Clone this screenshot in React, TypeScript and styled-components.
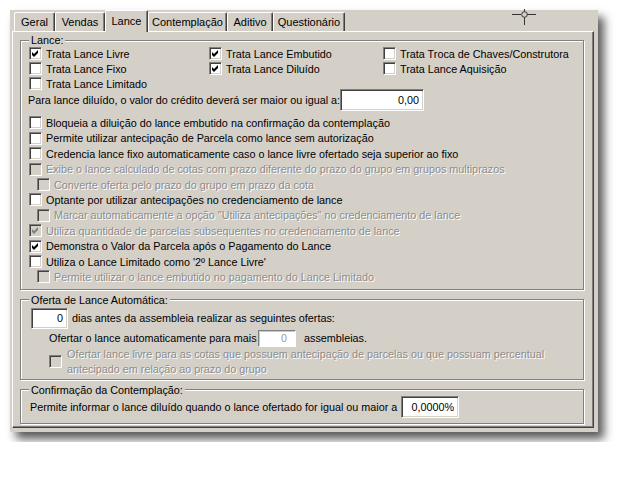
import React from 'react'
import styled, { createGlobalStyle } from 'styled-components'

const GlobalStyle = createGlobalStyle`
  html, body {
    margin: 0;
    padding: 0;
    background: #fff;
  }
  body {
    font-family: 'Liberation Sans', Arial, sans-serif;
    font-size: 10.8px;
    color: #000;
  }
`

interface TabDef {
  title: string
  width: number
}

const tabs: TabDef[] = [
  { title: 'Geral', width: 41 },
  { title: 'Vendas', width: 50 },
  { title: 'Lance', width: 43 },
  { title: 'Contemplação', width: 79 },
  { title: 'Aditivo', width: 46 },
  { title: 'Questionário', width: 72 },
]

interface OptionDef {
  label: string
  checked?: boolean
  disabled?: boolean
  indent?: boolean
}

const lanceGrid: OptionDef[] = [
  { label: 'Trata Lance Livre', checked: true },
  { label: 'Trata Lance Embutido', checked: true },
  { label: 'Trata Troca de Chaves/Construtora' },
  { label: 'Trata Lance Fixo' },
  { label: 'Trata Lance Diluído', checked: true },
  { label: 'Trata Lance Aquisição' },
  { label: 'Trata Lance Limitado' },
]

const lanceList: OptionDef[] = [
  { label: 'Bloqueia a diluição do lance embutido na confirmação da contemplação' },
  { label: 'Permite utilizar antecipação de Parcela como lance sem autorização' },
  { label: 'Credencia lance fixo automaticamente caso o lance livre ofertado seja superior ao fixo' },
  { label: 'Exibe o lance calculado de cotas com prazo diferente do prazo do grupo em grupos multiprazos', disabled: true },
  { label: 'Converte oferta pelo prazo do grupo em prazo da cota', disabled: true, indent: true },
  { label: 'Optante por utilizar antecipações no credenciamento de lance' },
  { label: 'Marcar automaticamente a opção "Utiliza antecipações" no credenciamento de lance', disabled: true, indent: true },
  { label: 'Utiliza quantidade de parcelas subsequentes no credenciamento de lance', disabled: true, checked: true },
  { label: 'Demonstra o Valor da Parcela após o Pagamento do Lance', checked: true },
  { label: "Utiliza o Lance Limitado como '2º Lance Livre'" },
  { label: 'Permite utilizar o lance embutido no pagamento do Lance Limitado', disabled: true, indent: true },
]

function CheckBox(props: { checked?: boolean; disabled?: boolean }) {
  return (
    <Box $disabled={props.disabled}>
      {props.checked && (
        <svg width="11" height="11" viewBox="0 0 11 11">
          <path
            d="M2 4 L4 6 L8 2 L8 5 L4 9 L2 7 Z"
            fill={props.disabled ? '#808080' : '#000'}
          />
        </svg>
      )}
    </Box>
  )
}

function Option(props: OptionDef) {
  return (
    <OptionRow $indent={props.indent} $disabled={props.disabled}>
      <CheckBox checked={props.checked} disabled={props.disabled} />
      <span>{props.label}</span>
    </OptionRow>
  )
}

function Crosshair() {
  return (
    <CursorMark width="24" height="16" viewBox="0 0 24 16">
      <g stroke="#333" strokeWidth="1" fill="none">
        <line x1="0" y1="5.5" x2="9" y2="5.5" />
        <line x1="15" y1="5.5" x2="24" y2="5.5" />
        <line x1="12.5" y1="0" x2="12.5" y2="2.5" />
        <line x1="12.5" y1="8.5" x2="12.5" y2="16" />
        <circle cx="12.5" cy="5.5" r="2.8" />
      </g>
    </CursorMark>
  )
}

export default function App() {
  return (
    <Page>
      <GlobalStyle />
      <Window>
        <Crosshair />
        <TabStrip>
          {tabs.map((tab) => (
            <Tab key={tab.title} $width={tab.width} $active={tab.title === 'Lance'}>
              {tab.title}
            </Tab>
          ))}
        </TabStrip>
        <TabPage>
          <Group>
            <Legend>Lance:</Legend>
            <OptionGrid>
              {lanceGrid.map((opt) => (
                <Option key={opt.label} {...opt} />
              ))}
            </OptionGrid>
            <ValueRow>
              <FieldLabel $width={312}>
                Para lance diluído, o valor do crédito deverá ser maior ou igual a:
              </FieldLabel>
              <NumberField $width={84} $height={22}>0,00</NumberField>
            </ValueRow>
            <OptionList>
              {lanceList.map((opt) => (
                <Option key={opt.label} {...opt} />
              ))}
            </OptionList>
          </Group>

          <Group $gap={4}>
            <Legend>Oferta de Lance Automática:</Legend>
            <AutoRow>
              <NumberField $width={37} $height={21}>0</NumberField>
              <span>dias antes da assembleia realizar as seguintes ofertas:</span>
            </AutoRow>
            <SubRow>
              <FieldLabel $width={209}>Ofertar o lance automaticamente para mais</FieldLabel>
              <NumberField $width={38} $height={17} $disabled>0</NumberField>
              <Trailing>assembleias.</Trailing>
            </SubRow>
            <WrapOption $disabled>
              <CheckBox disabled />
              <span>
                Ofertar lance livre para as cotas que possuem antecipação de parcelas ou que possuam percentual
                <br />
                antecipado em relação ao prazo do grupo
              </span>
            </WrapOption>
          </Group>

          <Group $gap={4} $bottom={5}>
            <Legend>Confirmação da Contemplação:</Legend>
            <ConfirmRow>
              <FieldLabel $width={371}>
                Permite informar o lance diluído quando o lance ofertado for igual ou maior a
              </FieldLabel>
              <NumberField $width={58} $height={22}>0,0000%</NumberField>
            </ConfirmRow>
          </Group>
        </TabPage>
      </Window>
    </Page>
  )
}

const Page = styled.div`
  padding: 10px;
`

const Window = styled.div`
  position: relative;
  width: 588px;
  height: 422px;
  box-sizing: border-box;
  padding: 0 4px 4px 2px;
  background: #d4d0c8;
  box-shadow: 6px 7px 9px rgba(0, 0, 0, 0.65);
  display: flex;
  flex-direction: column;
`

const CursorMark = styled.svg`
  position: absolute;
  left: 502px;
  top: -1px;
`

const TabStrip = styled.div`
  display: flex;
  align-items: flex-end;
  height: 21px;
  padding-left: 2px;
`

const Tab = styled.div<{ $width: number; $active?: boolean }>`
  position: relative;
  z-index: ${(p) => (p.$active ? 1 : 0)};
  width: ${(p) => p.$width}px;
  height: ${(p) => (p.$active ? 22 : 19)}px;
  margin-bottom: ${(p) => (p.$active ? -1 : 0)}px;
  box-sizing: border-box;
  padding-bottom: ${(p) => (p.$active ? 2 : 0)}px;
  display: flex;
  align-items: center;
  justify-content: center;
  background: #d4d0c8;
  border-top: 1px solid #fff;
  border-left: 1px solid #fff;
  border-right: 1px solid #404040;
  border-radius: 2px 2px 0 0;
  box-shadow: inset -1px 0 0 #808080;
  white-space: nowrap;
  font-size: 11px;
`

const TabPage = styled.div`
  flex: 1;
  display: flex;
  flex-direction: column;
  box-sizing: border-box;
  padding: 2px 9px 3px 7px;
  border-top: 1px solid #fff;
  border-left: 1px solid #fff;
  border-right: 1px solid #404040;
  border-bottom: 1px solid #404040;
  box-shadow: inset -1px -1px 0 #808080;
`

const Group = styled.fieldset<{ $gap?: number; $bottom?: number }>`
  margin: ${(p) => p.$gap ?? 0}px 0 0 0;
  padding: 0 8px ${(p) => p.$bottom ?? 2}px 8px;
  min-width: 0;
  border: 1px solid #808080;
  box-shadow: inset 1px 1px 0 #fff, 1px 1px 0 #fff;
`

const Legend = styled.legend`
  padding: 0 2px 0 2px;
  margin-left: 0;
  line-height: 12px;
  background: #d4d0c8;
`

const OptionGrid = styled.div`
  display: grid;
  grid-template-columns: 180px 174px 1fr;
  grid-auto-rows: 15px;
`

const OptionList = styled.div`
  display: grid;
  grid-auto-rows: 15.4px;
  margin-top: 4.3px;
  padding-bottom: 2px;
`

const OptionRow = styled.label<{ $indent?: boolean; $disabled?: boolean }>`
  display: flex;
  align-items: center;
  gap: 4px;
  padding-left: ${(p) => (p.$indent ? 8 : 0)}px;
  white-space: nowrap;
  color: ${(p) => (p.$disabled ? '#8c8c8c' : '#000')};
  text-shadow: ${(p) => (p.$disabled ? '1px 1px 0 #fff' : 'none')};
`

const WrapOption = styled(OptionRow)`
  padding-left: 20px;
  gap: 5px;
  line-height: 15px;
`

const Box = styled.span<{ $disabled?: boolean }>`
  flex: none;
  width: 13px;
  height: 13px;
  box-sizing: border-box;
  display: flex;
  border-top: 1px solid #808080;
  border-left: 1px solid #808080;
  border-right: 1px solid #fff;
  border-bottom: 1px solid #fff;
  box-shadow: inset 1px 1px 0 #404040, inset -1px -1px 0 #d4d0c8;
  background: ${(p) => (p.$disabled ? '#d4d0c8' : '#fff')};
`

const ValueRow = styled.div`
  display: flex;
  align-items: center;
  height: 22px;
  margin: -2px 0 0 -1px;
`

const FieldLabel = styled.span<{ $width: number }>`
  flex: none;
  width: ${(p) => p.$width}px;
  white-space: nowrap;
`

const NumberField = styled.div<{ $width: number; $height: number; $disabled?: boolean }>`
  flex: none;
  width: ${(p) => p.$width}px;
  height: ${(p) => p.$height}px;
  box-sizing: border-box;
  display: flex;
  align-items: center;
  justify-content: flex-end;
  padding-right: ${(p) => (p.$disabled ? 8 : 4)}px;
  background: #fff;
  border-top: 1px solid #808080;
  border-left: 1px solid #808080;
  border-right: 1px solid #fff;
  border-bottom: 1px solid #fff;
  box-shadow: ${(p) =>
    p.$disabled
      ? 'inset 1px 1px 0 #c8c8c8'
      : 'inset 1px 1px 0 #404040, inset -1px -1px 0 #d4d0c8'};
  color: ${(p) => (p.$disabled ? '#9a9a9a' : '#000')};
`

const AutoRow = styled.div`
  display: flex;
  align-items: center;
  gap: 4px;
  margin: 2px 0 0 2px;
  white-space: nowrap;
`

const SubRow = styled.div`
  display: flex;
  align-items: center;
  height: 17px;
  margin-top: 1px;
  padding-left: 20px;
  white-space: nowrap;
`

const Trailing = styled.span`
  margin-left: 8px;
`

const ConfirmRow = styled.div`
  display: flex;
  align-items: center;
  margin: 0 0 0 1px;
`
